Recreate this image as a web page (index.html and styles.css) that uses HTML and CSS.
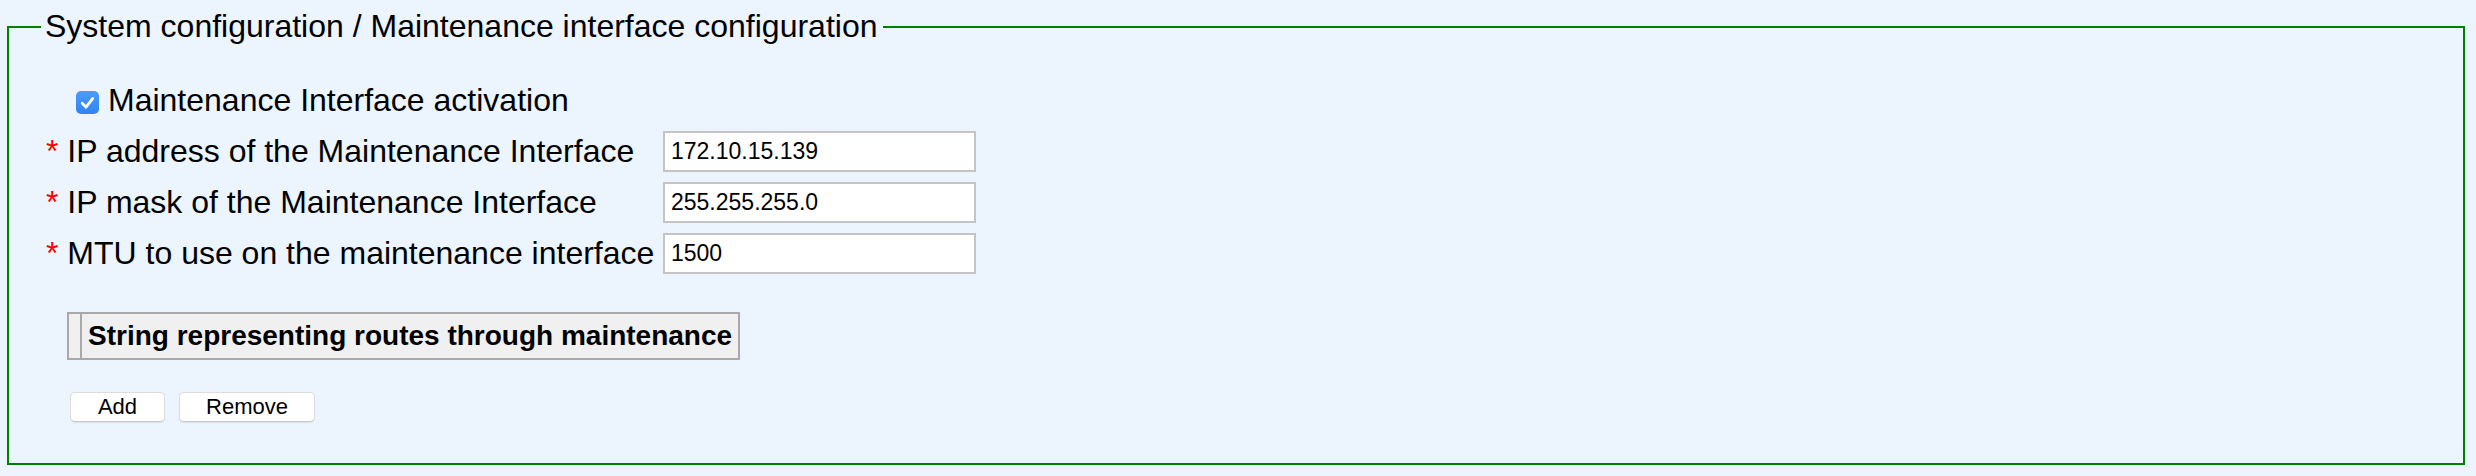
FILE: index.html
```html
<!DOCTYPE html>
<html lang="en">
<head>
<meta charset="utf-8">
<title>Maintenance interface configuration</title>
<link rel="stylesheet" href="styles.css">
</head>
<body>
<fieldset class="panel">
  <legend class="panel-title">System configuration / Maintenance interface configuration</legend>
  <div class="panel-body">
    <label class="check-row">
      <span class="checkbox" role="checkbox" aria-checked="true">
        <svg viewBox="0 0 23 23" width="23" height="23" aria-hidden="true">
          <path d="M6.2 12.2 L10 16.2 L16.8 7.4" fill="none" stroke="#ffffff" stroke-width="2.8" stroke-linecap="round" stroke-linejoin="round"/>
        </svg>
      </span>
      <span class="check-label">Maintenance Interface activation</span>
    </label>

    <div class="form-grid">
      <label class="field-label"><span class="req">*</span> IP address of the Maintenance Interface</label>
      <input class="field-input" type="text" value="172.10.15.139">
      <label class="field-label"><span class="req">*</span> IP mask of the Maintenance Interface</label>
      <input class="field-input" type="text" value="255.255.255.0">
      <label class="field-label"><span class="req">*</span> MTU to use on the maintenance interface</label>
      <input class="field-input" type="text" value="1500">
    </div>

    <table class="routes">
      <thead>
        <tr>
          <th class="routes-sel"></th>
          <th class="routes-head">String representing routes through maintenance</th>
        </tr>
      </thead>
    </table>

    <div class="actions">
      <button class="btn btn-add" type="button">Add</button>
      <button class="btn btn-remove" type="button">Remove</button>
    </div>
  </div>
</fieldset>
</body>
</html>
```

FILE: styles.css
```css
html, body {
  margin: 0;
  padding: 0;
}

body {
  background: #ecf4fe;
  font-family: "Liberation Sans", Arial, Helvetica, sans-serif;
  color: #000;
  padding: 9px 11px 10px 7px;
}

.panel {
  margin: 0;
  padding: 0;
  border: 2px solid #008000;
  min-width: 0;
}

.panel-title {
  font-size: 32px;
  line-height: 34px;
  padding: 0 6px 2px 4px;
  margin-left: 32px;
}

.panel-body {
  padding: 37px 0 41px 37px;
}

.check-row {
  display: flex;
  align-items: center;
  gap: 9px;
  margin-left: 30px;
  font-size: 32px;
  line-height: 37px;
}

.checkbox {
  width: 23px;
  height: 23px;
  border-radius: 5px;
  background: linear-gradient(#4b9bf9, #2f84f3);
  display: flex;
  margin-top: 3px;
}

.form-grid {
  display: grid;
  grid-template-columns: 609px 313px;
  column-gap: 8px;
  row-gap: 10px;
  align-items: center;
  margin-top: 12px;
}

.field-label {
  font-size: 32px;
  line-height: 37px;
  white-space: nowrap;
}

.req {
  color: #ff0000;
}

.field-input {
  box-sizing: border-box;
  width: 313px;
  height: 41px;
  border: 2px solid #c4c4c4;
  background: #fff;
  padding: 0 6px;
  font-family: "Liberation Sans", Arial, sans-serif;
  font-size: 23px;
  color: #000;
  outline: none;
}

.routes {
  border-collapse: collapse;
  margin: 38px 0 0 21px;
  border: 2px solid #a9a9a9;
  background: #f0f0f0;
}

.routes th {
  padding: 0;
  height: 44px;
  font-size: 28px;
  font-weight: bold;
  text-align: left;
}

.routes-sel {
  width: 11px;
  border-right: 2px solid #a9a9a9;
}

.routes-head {
  padding: 0 6px 0 6px !important;
  white-space: nowrap;
}

.actions {
  display: flex;
  gap: 14px;
  margin: 32px 0 0 24px;
}

.btn {
  box-sizing: border-box;
  height: 30px;
  background: #fff;
  border: 1px solid #dcdcdc;
  border-bottom-color: #c8c8c8;
  border-radius: 5px;
  box-shadow: 0 1px 1px rgba(0, 0, 0, 0.08);
  font-family: "Liberation Sans", Arial, sans-serif;
  font-size: 22px;
  line-height: 26px;
  padding: 0;
  color: #000;
}

.btn-add {
  width: 95px;
}

.btn-remove {
  width: 136px;
}
```
